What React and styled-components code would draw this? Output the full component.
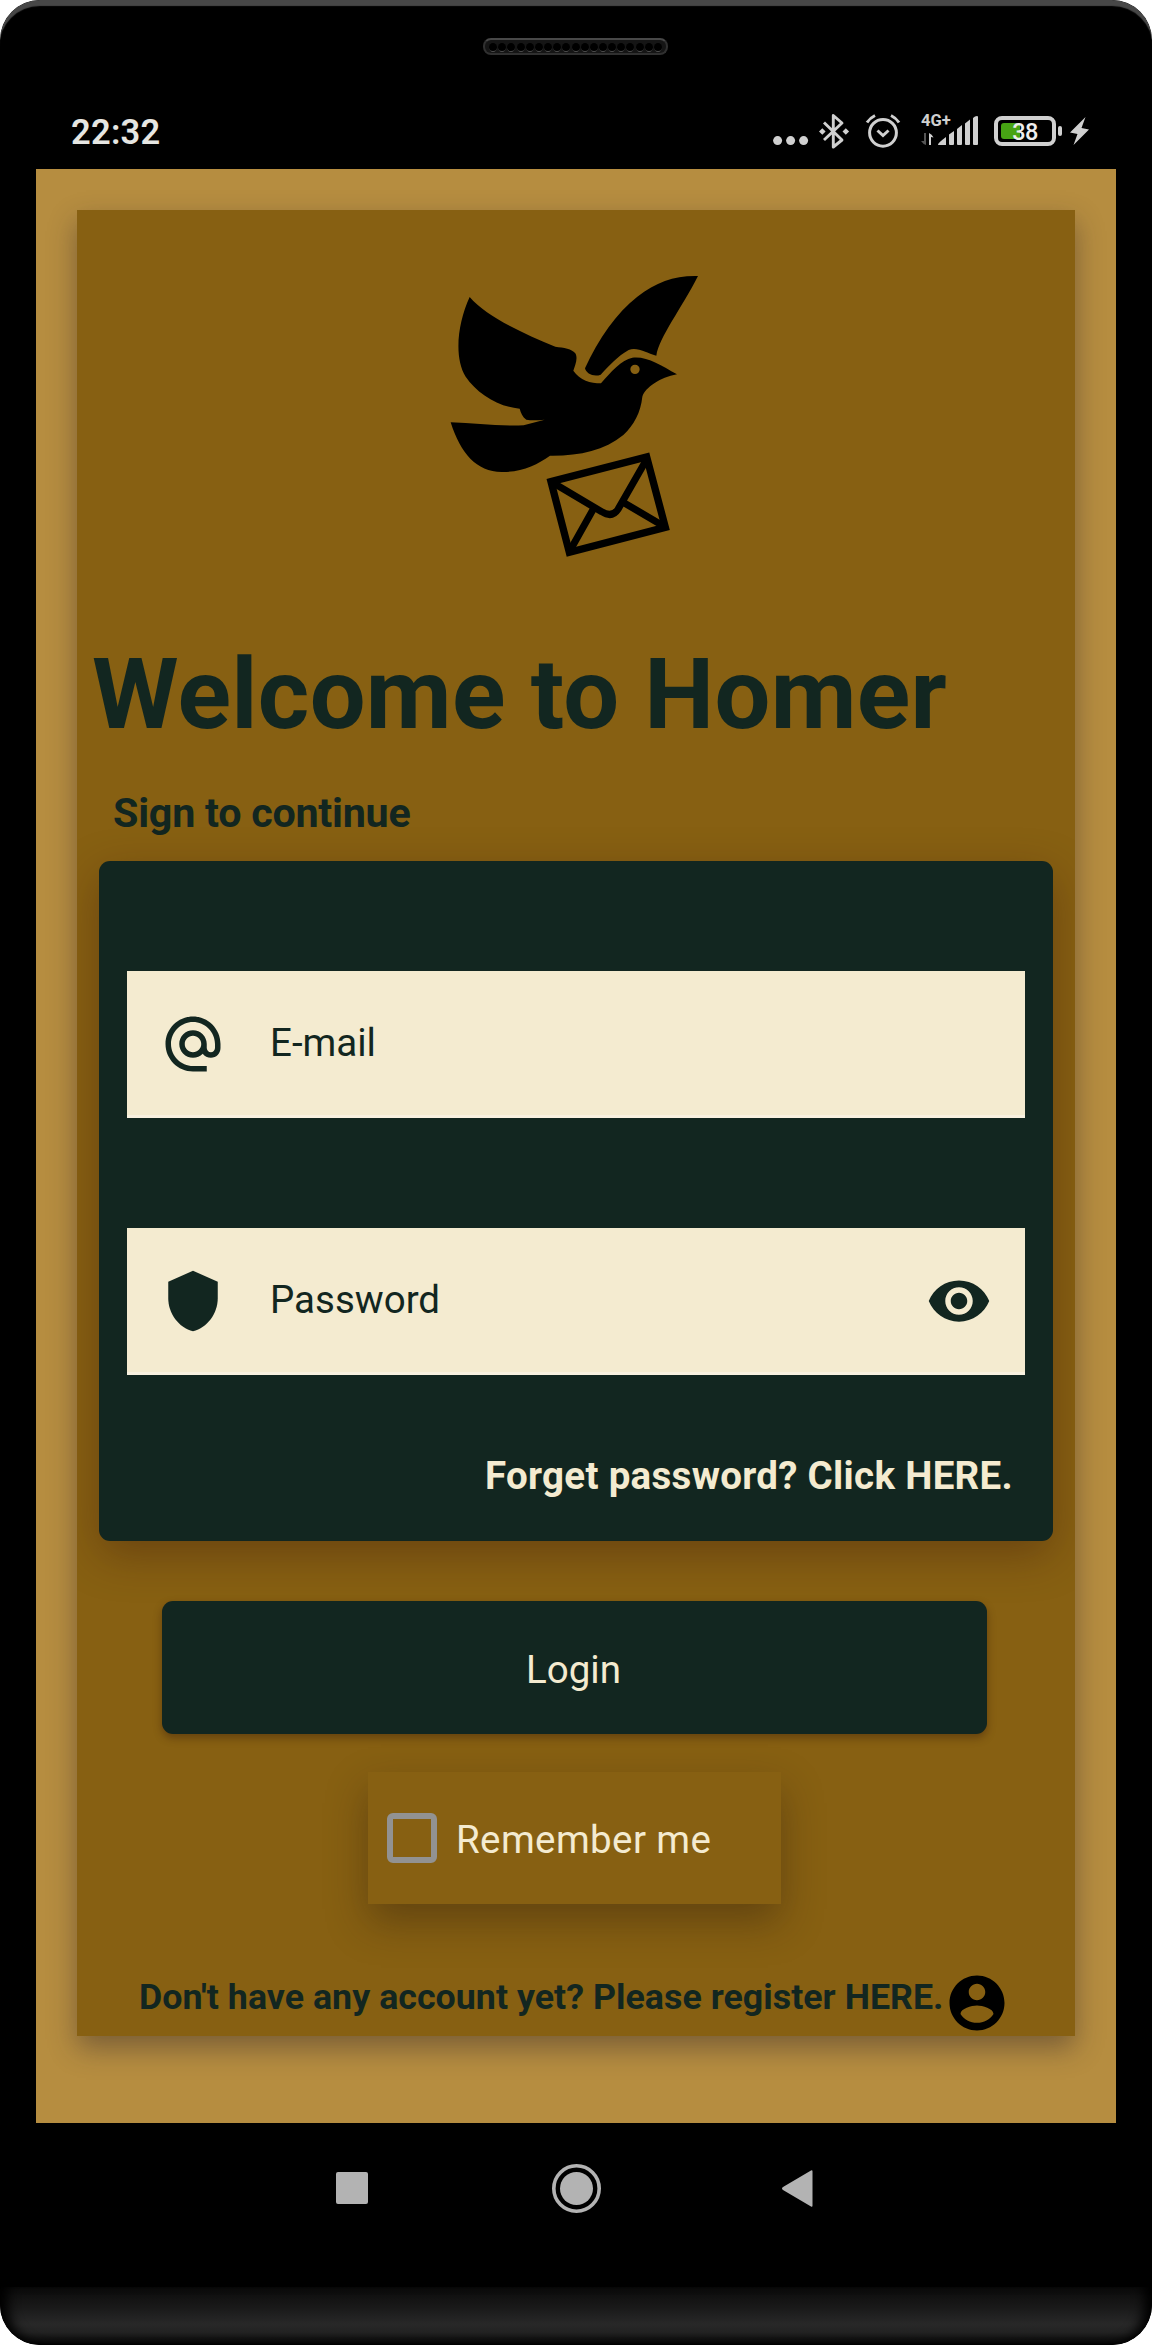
import React from "react";
import styled, { createGlobalStyle } from "styled-components";

const color = {
  ink: "#122620",
  cream: "#f4ebd0",
  gold: "#b68d40",
  bronze: "#876012",
  status: "#d0d0d0",
  nav: "#b3b3b3",
};

const GlobalStyle = createGlobalStyle`
  * { box-sizing: border-box; }
  body { margin: 0; background: #fff; font-family: Roboto, sans-serif; }
  svg { display: block; flex: none; }
`;

const Phone = styled.div`
  width: 1152px;
  height: 2345px;
  display: flex;
  flex-direction: column;
  align-items: center;
  overflow: hidden;
  background: #000;
  border-radius: 40px;
`;

const TopBezel = styled.div`
  width: 100%;
  height: 94px;
  padding: 38px 1px 0 0;
  display: flex;
  justify-content: center;
  border-radius: 40px 40px 0 0;
  box-shadow: inset 0 7px 1px -1px #474747;
`;

const Speaker = styled.div`
  width: 185px;
  height: 17px;
  padding-top: 1px;
  display: flex;
  justify-content: center;
  align-items: center;
  gap: 1.17px;
  border-radius: 8px;
  background: #151515;
  border: 2px solid #303030;
  border-top-color: #484848;
`;

const Hole = styled.i`
  width: 8px;
  height: 9px;
  border-radius: 50%;
  background: #000;
  border-bottom: 1px solid #505050;
`;

const StatusBar = styled.div`
  width: 1080px;
  height: 75px;
  display: flex;
  align-items: flex-start;
  justify-content: space-between;
  padding: 16px 27px 0 35px;
`;

const Clock = styled.div`
  margin-top: 2px;
  font-size: 34.5px;
  line-height: 40px;
  letter-spacing: 0.25px;
  font-weight: 600;
  color: #e6e6e2;
`;

const StatusIcons = styled.div`
  display: flex;
  align-items: flex-start;
  height: 44px;
`;

const Network = styled.div`
  width: 58px;
  height: 44px;
  margin: 0 15px 0 20px;
  position: relative;
`;

const NetworkLabel = styled.span`
  position: absolute;
  left: 0;
  top: 0;
  font-size: 16.5px;
  line-height: 21px;
  font-weight: 700;
  color: ${color.status};
`;

const Battery = styled.div`
  width: 62px;
  height: 30px;
  margin-top: 6px;
  padding: 3px;
  display: flex;
  border: 4px solid ${color.status};
  border-radius: 8px;
  position: relative;
`;

const Charge = styled.i`
  width: 19px;
  height: 16px;
  border-radius: 3px 0 0 3px;
  background: #47a414;
`;

const Percent = styled.span`
  position: absolute;
  left: 0;
  right: 0;
  top: -3px;
  text-align: center;
  font-size: 23.5px;
  line-height: 30px;
  letter-spacing: -0.5px;
  font-weight: 500;
  color: #eee;
`;

const BatteryNub = styled.i`
  width: 4px;
  height: 10px;
  margin: 16px 8px 0 2px;
  border-radius: 2px;
  background: ${color.status};
`;

const Screen = styled.main`
  width: 1080px;
  height: 1954px;
  padding: 41px 41px 0;
  background: ${color.gold};
  overflow: hidden;
`;

const Panel = styled.section`
  height: 1826px;
  background: ${color.bronze};
  overflow: hidden;
  display: flex;
  flex-direction: column;
  align-items: flex-start;
  box-shadow: 0 12px 26px rgba(40, 30, 40, 0.42);
`;

const Logo = styled.svg`
  margin: 50px 0 0 353px;
`;

const Title = styled.h1`
  margin: 66px 0 0 15px;
  font-size: 99px;
  line-height: 116px;
  letter-spacing: 0.32px;
  font-weight: 700;
  color: ${color.ink};
  white-space: nowrap;
`;

const Subtitle = styled.p`
  margin: 37px 0 24px 36px;
  font-size: 41.25px;
  line-height: 48px;
  letter-spacing: -0.25px;
  font-weight: 700;
  color: ${color.ink};
`;

const Card = styled.div`
  width: 954px;
  height: 680px;
  flex: none;
  margin-left: 22px;
  padding: 110px 28px 0;
  border-radius: 11px;
  background: ${color.ink};
  box-shadow: 0 14px 44px rgba(55, 20, 15, 0.36);
`;

const Field = styled.label`
  height: 147px;
  padding: 2px 33px 0;
  display: flex;
  align-items: center;
  background: ${color.cream};
  border-bottom: 3px solid #f8f1e0;
  color: ${color.ink};
  font-size: 38.5px;
  line-height: 46px;

  & + & { margin-top: 110px; }
`;

const FieldText = styled.span`
  flex: 1;
  margin: -2px 0 0 44px;
`;

const Forgot = styled.p`
  margin: 78px 12px 0 0;
  text-align: right;
  font-size: 38.5px;
  line-height: 46px;
  letter-spacing: 0.3px;
  font-weight: 700;
  color: ${color.cream};
`;

const LoginButton = styled.button`
  width: 825px;
  height: 133px;
  flex: none;
  margin: 60px 0 0 85px;
  padding: 4px 2px 0 0;
  border: 0;
  border-radius: 11px;
  background: ${color.ink};
  color: ${color.cream};
  font: 400 38.5px/46px Roboto, sans-serif;
  box-shadow: 0 4px 9px rgba(50, 20, 10, 0.4);
`;

const Remember = styled.label`
  width: 413px;
  height: 132px;
  flex: none;
  margin: 38px 0 0 291px;
  padding-left: 19px;
  display: flex;
  align-items: center;
  gap: 19px;
  background: ${color.bronze};
  color: ${color.cream};
  font-size: 38.5px;
  line-height: 46px;
  letter-spacing: 0.4px;
  box-shadow: 0 18px 38px rgba(40, 24, 14, 0.38);
`;

const Checkbox = styled.i`
  width: 50px;
  height: 50px;
  border: 6px solid #929292;
  border-radius: 6px;
`;

const RememberText = styled.span`
  padding-top: 4px;
`;

const RegisterRow = styled.div`
  margin: 66px 0 0 62px;
  width: 871px;
  height: 66px;
  display: flex;
  align-items: flex-start;
  justify-content: space-between;
`;

const RegisterText = styled.span`
  margin-top: 6px;
  font-size: 35.75px;
  line-height: 42px;
  letter-spacing: 0.03px;
  font-weight: 700;
  color: ${color.ink};
  white-space: nowrap;
`;

const NavBar = styled.nav`
  width: 1080px;
  height: 164px;
  padding: 41px 304px 0 300px;
  display: grid;
  grid-template-columns: 216px 229px 32px;
  align-items: start;
`;

const Chin = styled.div`
  width: 100%;
  height: 58px;
  border-radius: 0 0 40px 40px;
  background: linear-gradient(#0b0b0b, #191919 35%, #282828 64%, #222 78%, #090909 96%, #000);
  box-shadow: inset 14px 0 12px -6px #000, inset -14px 0 12px -6px #000;
`;

const Icon = ({ d, fill = color.ink }) => (
  <svg width="66" height="66" viewBox="0 0 24 24" fill={fill}>
    <path d={d} />
  </svg>
);

const paths = {
  at: "M12 2C6.48 2 2 6.48 2 12s4.48 10 10 10h5v-2h-5c-4.34 0-8-3.66-8-8s3.66-8 8-8 8 3.66 8 8v1.43c0 .79-.71 1.57-1.5 1.57s-1.5-.78-1.5-1.57V12c0-2.76-2.24-5-5-5s-5 2.24-5 5 2.24 5 5 5c1.38 0 2.64-.56 3.54-1.47.65.89 1.77 1.47 2.96 1.47 1.97 0 3.5-1.6 3.5-3.57V12c0-5.52-4.48-10-10-10zm0 13c-1.66 0-3-1.34-3-3s1.34-3 3-3 3 1.34 3 3-1.34 3-3 3z",
  shield: "M12 1 3 5v6c0 5.55 3.84 10.74 9 12 5.16-1.26 9-6.45 9-12V5l-9-4z",
  eye: "M12 4.5C7 4.5 2.73 7.61 1 12c1.73 4.39 6 7.5 11 7.5s9.27-3.11 11-7.5c-1.73-4.39-6-7.5-11-7.5zM12 17c-2.76 0-5-2.24-5-5s2.24-5 5-5 5 2.24 5 5-2.24 5-5 5zm0-8c-1.66 0-3 1.34-3 3s1.34 3 3 3 3-1.34 3-3-1.34-3-3-3z",
  account: "M12 2C6.48 2 2 6.48 2 12s4.48 10 10 10 10-4.48 10-10S17.52 2 12 2zm0 3c1.66 0 3 1.34 3 3s-1.34 3-3 3-3-1.34-3-3 1.34-3 3-3zm0 14.2c-2.5 0-4.71-1.28-6-3.22.03-1.99 4-3.08 6-3.08 1.99 0 5.97 1.09 6 3.08-1.29 1.94-3.5 3.22-6 3.22z",
};

const Dove = () => (
  <Logo width="290" height="310" viewBox="0 0 870 930">
    <path d="M804 48C735 46 680 65 622 110C560 158 505 236 465 325C468 341 492 352 512 344C540 315 563 288 596 270C622 260 648 279 679 287C687 232 755 145 804 48Z" />
    <path
      fillRule="evenodd"
      d="M119 111C170 170 278 220 376 260C401 263 426 266 437 281C444 297 435 317 430 332C450 361 481 370 513 370C540 338 576 298 607 293C651 288 691 315 741 343C689 353 647 382 637 410C632 458 612 494 580 525C522 572 448 588 360 587C322 614 276 636 219 636C141 638 92 581 62 487C135 490 207 499 281 496L344 479C326 480 309 483 289 479C277 470 273 459 269 446C203 440 141 400 107 350C71 292 83 189 119 111ZM615 314A14 14 0 1 0 615 342A14 14 0 1 0 615 314Z"
    />
    <g fill="none" stroke="#000" strokeWidth="21">
      <path d="M363 665L650 591L706 802L418 877Z" strokeWidth="22" />
      <path d="M370 669L515 755Q546 775 564 748L651 596" />
      <path d="M490 747L421 870M583 729L704 800" />
    </g>
  </Logo>
);

const Bars = () => (
  <svg width="58" height="44" viewBox="0 0 58 44" fill={color.status}>
    <path d="M17 34.5Q17 33 25 27V35H18Q17 35 17 34.5Z" />
    <path d="M28 24.5L33 21V34Q33 35 32 35H29Q28 35 28 34Z" />
    <path d="M36 19L41 15V34Q41 35 40 35H37Q36 35 36 34Z" />
    <path d="M44 13.5L49 9.5V34Q49 35 48 35H45Q44 35 44 34Z" />
    <path d="M52 8Q54 6 56 6Q57 6 57 7V34Q57 35 56 35H53Q52 35 52 34Z" />
    <path d="M3 23H5V35Q2 34 0 31L3 31Z" fill="#555" />
    <path d="M8 35V23Q11 24 12.500 27.500L10 27V35Z" />
  </svg>
);

export default function App() {
  return (
    <>
      <GlobalStyle />
      <Phone>
        <TopBezel>
          <Speaker>
            {Array.from({ length: 19 }, (_, i) => (
              <Hole key={i} />
            ))}
          </Speaker>
        </TopBezel>

        <StatusBar>
          <Clock>22:32</Clock>
          <StatusIcons>
            <svg width="36" height="44" viewBox="0 0 36 44" fill={color.status}>
              <circle cx="4.600" cy="30.600" r="4.500" />
              <circle cx="17.600" cy="30.600" r="4.500" />
              <circle cx="30.600" cy="30.600" r="4.500" />
            </svg>
            <svg width="56" height="44" viewBox="-10 0 56 44" fill="none" stroke={color.status} strokeWidth="2.900">
              <path d="M5 12.500L23 30L14.300 37V5.500L23 13L5 30" strokeLinejoin="round" />
              <path d="M0 21.500L3.300 18.200L6.600 21.500L3.300 24.800ZM23.500 21.500L26.800 18.200L30.100 21.500L26.800 24.800Z" fill={color.status} stroke="none" />
            </svg>
            <svg width="36" height="44" viewBox="-4 0 36 44" fill="none" stroke={color.status} strokeWidth="3">
              <circle cx="14" cy="22.800" r="13.400" />
              <path d="M8.500 20.500L14 25.500L19.500 20.500" />
              <path d="M-2 12.500Q1 8 6 5.500M30 12.500Q27 8 22 5.500" />
            </svg>
            <Network>
              <Bars />
              <NetworkLabel>4G+</NetworkLabel>
            </Network>
            <Battery>
              <Charge />
              <Percent>38</Percent>
            </Battery>
            <BatteryNub />
            <svg width="19" height="44" viewBox="0 0 19 44" fill={color.status}>
              <path d="M15.500 7L0 22.500L7.500 24L3.500 35L19 19.500L11.500 18Z" />
            </svg>
          </StatusIcons>
        </StatusBar>

        <Screen>
          <Panel>
            <Dove />
            <Title>Welcome to Homer</Title>
            <Subtitle>Sign to continue</Subtitle>
            <Card>
              <Field>
                <Icon d={paths.at} />
                <FieldText>E-mail</FieldText>
              </Field>
              <Field>
                <Icon d={paths.shield} />
                <FieldText>Password</FieldText>
                <Icon d={paths.eye} />
              </Field>
              <Forgot>Forget password? Click HERE.</Forgot>
            </Card>
            <LoginButton>Login</LoginButton>
            <Remember>
              <Checkbox />
              <RememberText>Remember me</RememberText>
            </Remember>
            <RegisterRow>
              <RegisterText>Don't have any account yet? Please register HERE.</RegisterText>
              <Icon d={paths.account} fill="#000" />
            </RegisterRow>
          </Panel>
        </Screen>

        <NavBar>
          <svg width="32" height="50" viewBox="0 0 32 50" fill={color.nav}>
            <rect y="8" width="32" height="32" rx="2" />
          </svg>
          <svg width="49" height="50" viewBox="0 0 49 50" fill={color.nav}>
            <circle cx="24.500" cy="24.500" r="16.500" />
            <circle cx="24.500" cy="24.500" r="22.700" fill="none" stroke={color.nav} strokeWidth="3.600" />
          </svg>
          <svg width="32" height="50" viewBox="0 0 32 50" fill={color.nav}>
            <path d="M30 6.500Q31.500 5.500 31.500 7.500V41.500Q31.500 43.500 30 42.500L2 26Q0 24.500 2 23Z" />
          </svg>
        </NavBar>
        <Chin />
      </Phone>
    </>
  );
}
